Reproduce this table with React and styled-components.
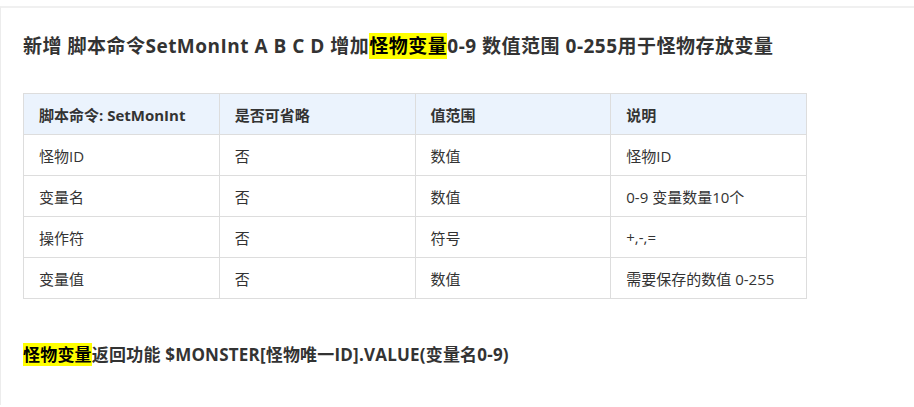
import React from 'react'
import styled, { createGlobalStyle } from 'styled-components'

const GlobalStyle = createGlobalStyle`
    body {
        margin: 0;
        background: #ffffff;
        font-family: "Open Sans", "Noto Sans CJK SC", sans-serif;
        color: #333333;
    }
`

const filas = [
    ['怪物ID', '否', '数值', '怪物ID'],
    ['变量名', '否', '数值', '0-9 变量数量10个'],
    ['操作符', '否', '符号', '+,-,='],
    ['变量值', '否', '数值', '需要保存的数值 0-255'],
]

const App = () => {
    return (
        <>
            <GlobalStyle />
            <Container>
                <Titulo>
                    新增 脚本命令SetMonInt A B C D 增加<Marca>怪物变量</Marca>0-9 数值范围 0-255用于怪物存放变量
                </Titulo>
                <Tabla>
                    <thead>
                        <tr>
                            <Cabeza>脚本命令: SetMonInt</Cabeza>
                            <Cabeza>是否可省略</Cabeza>
                            <Cabeza>值范围</Cabeza>
                            <Cabeza>说明</Cabeza>
                        </tr>
                    </thead>
                    <tbody>
                        {filas.map((fila, i) => (
                            <tr key={i}>
                                {fila.map((celda, j) => (
                                    <Celda key={j}>{celda}</Celda>
                                ))}
                            </tr>
                        ))}
                    </tbody>
                </Tabla>
                <Parrafo>
                    <Marca>怪物变量</Marca>返回功能 $MONSTER[怪物唯一ID].VALUE(变量名0-9)
                </Parrafo>
            </Container>
        </>
    )
}

export default App

const Container = styled.div`
    margin-top: 6px;
    border-top: 2px solid #f0f0f0;
    border-left: 1px solid #ececec;
    padding: 0 22px;
    height: 399px;
    box-sizing: border-box;
`

const Titulo = styled.h2`
    margin: 25px 0 0 0;
    font-size: 19px;
    line-height: 26px;
    letter-spacing: 0.5px;
    font-weight: 700;
    color: #333333;
`

const Marca = styled.span`
    background: #ffff00;
    color: #000000;
`

const Tabla = styled.table`
    margin-top: 34px;
    width: 784px;
    border-collapse: collapse;
    table-layout: fixed;
    font-size: 15px;
`

const Cabeza = styled.th`
    background: #ebf3fd;
    border: 1px solid #dddddd;
    height: 41px;
    padding: 0 15px;
    text-align: left;
    font-weight: 700;
    color: #333333;
    box-sizing: border-box;
`

const Celda = styled.td`
    border: 1px solid #dddddd;
    height: 41px;
    padding: 0 15px;
    color: #333333;
    box-sizing: border-box;
`

const Parrafo = styled.p`
    margin: 44px 0 0 0;
    font-size: 17px;
    line-height: 24px;
    letter-spacing: 0.2px;
    font-weight: 700;
    color: #333333;
`
